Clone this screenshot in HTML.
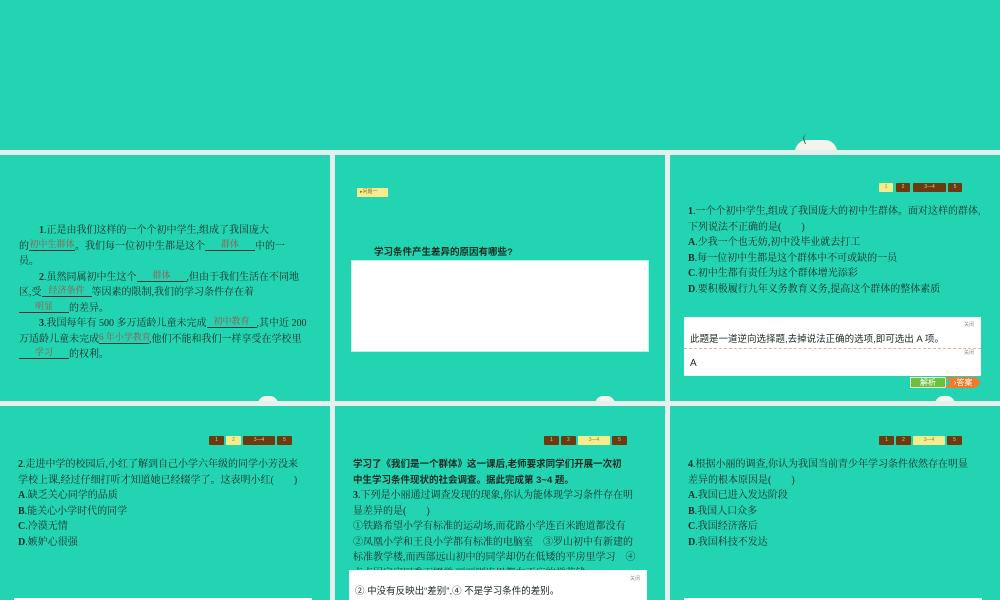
<!DOCTYPE html>
<html><head><meta charset="utf-8"><style>
*{margin:0;padding:0;box-sizing:border-box}
body{width:1000px;height:600px;overflow:hidden;background:#e3f0ec;position:relative;font-family:"Liberation Serif","Noto Serif CJK SC",serif;color:#1a2a20}
.p{position:absolute;background:#22d4b2;overflow:hidden}
.t{position:absolute;font-size:10px;line-height:15.5px;white-space:nowrap}
.b{font-weight:bold}
.s{font-family:"Liberation Sans","Noto Sans CJK SC",sans-serif}
.u{display:inline-block;border-bottom:1px solid #333;text-align:center;color:#a0524a;font-size:9px;line-height:11px;height:12px;vertical-align:2px}
.nav{position:absolute;height:9px}
.nav span{position:absolute;top:0;height:9px;background:#6b3a0e;color:#e8c890;font-size:5px;line-height:9px;text-align:center;border-radius:1px;font-family:"Liberation Sans",sans-serif}
.nav span.y{background:#f6ec8c;color:#9a8040}
.wb{position:absolute;background:#fff}
.dome{position:absolute;width:34px;height:14px;border-radius:17px 17px 0 0;background:#f4f4ec}
</style></head><body>
<div class="p" style="left:0;top:0;width:1000px;height:150px">
<div class="dome" style="left:795px;top:140px;width:42px;height:12px"></div>
<div style="position:absolute;left:803px;top:133px;width:10px;height:10px;border-left:1.5px solid #2a4a3a;border-radius:6px 0 0 0;transform:rotate(-20deg)"></div>
</div>

<!-- row1 panel1 -->
<div class="p" style="left:0;top:155px;width:330px;height:246px">
<div class="t" style="left:19px;top:68px">　　<b>1</b>.正是由我们这样的一个个初中学生,组成了我国庞大<br>的<span class="u" style="width:46px">初中生群体</span>。我们每一位初中生都是这个<span class="u" style="width:50px">群体</span>中的一<br>员。<br>　　<b>2</b>.虽然同属初中生这个<span class="u" style="width:50px">群体</span>,但由于我们生活在不同地<br>区,受<span class="u" style="width:50px">经济条件</span>等因素的限制,我们的学习条件存在着<br><span class="u" style="width:50px">明显</span>的差异。<br>　　<b>3</b>.我国每年有 500 多万适龄儿童未完成<span class="u" style="width:50px">初中教育</span>,其中近 200<br>万适龄儿童未完成<span class="u" style="width:50px">6 年小学教育</span>,他们不能和我们一样享受在学校里<br><span class="u" style="width:50px">学习</span>的权利。</div>
<div class="dome" style="left:258px;top:241px;width:20px;height:8px"></div>
</div>

<!-- row1 panel2 -->
<div class="p" style="left:335px;top:155px;width:330px;height:246px">
<div style="position:absolute;left:22px;top:33px;width:31px;height:9px;background:#f6ec8c;font-size:5px;line-height:9px;color:#8a6a30;padding-left:3px;font-family:'Liberation Sans','Noto Sans CJK SC',sans-serif">▸问题一</div>
<div class="t s b" style="left:39px;top:90px;font-size:9.5px">学习条件产生差异的原因有哪些?</div>
<div class="wb" style="left:16px;top:105px;width:298px;height:92px;border:1px solid #bdf0e0"></div>
<div class="dome" style="left:260px;top:241px;width:20px;height:8px"></div>
</div>

<!-- row1 panel3 -->
<div class="p" style="left:670px;top:155px;width:330px;height:246px">
<div class="nav" style="left:209px;top:28px"><span class="y" style="left:0;width:14px">1</span><span style="left:17px;width:14px">2</span><span style="left:34px;width:33px">3—4</span><span style="left:69px;width:14px">5</span></div>
<div class="t" style="left:18px;top:49px"><b>1</b>.一个个初中学生,组成了我国庞大的初中生群体。面对这样的群体,<br>下列说法不正确的是(　　)<br><b>A</b>.少我一个也无妨,初中没毕业就去打工<br><b>B</b>.每一位初中生都是这个群体中不可或缺的一员<br><b>C</b>.初中生都有责任为这个群体增光添彩<br><b>D</b>.要积极履行九年义务教育义务,提高这个群体的整体素质</div>
<div class="wb" style="left:14px;top:162px;width:297px;height:59px"></div>
<div class="t s" style="left:294px;top:163px;font-size:5px;color:#888">关闭</div>
<div class="t s" style="left:20px;top:177px;font-size:9.5px">此题是一道逆向选择题,去掉说法正确的选项,即可选出 A 项。</div>
<div style="position:absolute;left:14px;top:193px;width:297px;border-top:1px dashed #e8b0a0"></div>
<div class="t s" style="left:294px;top:191px;font-size:5px;color:#888">关闭</div>
<div class="t s" style="left:20px;top:201px;font-size:10px">A</div>
<div style="position:absolute;left:240px;top:222px;width:36px;height:11px;background:#6cc040;border:1px solid #f0f0c0;color:#fff;font-size:8px;line-height:9px;text-align:center;font-family:'Liberation Sans','Noto Sans CJK SC',sans-serif">解析</div>
<div style="position:absolute;left:275px;top:222px;width:36px;height:11px;background:#f07a30;color:#fff;font-size:8px;line-height:11px;text-align:center;clip-path:polygon(0 0,85% 0,100% 50%,85% 100%,0 100%,15% 50%);font-family:'Liberation Sans','Noto Sans CJK SC',sans-serif">›答案</div>
<div class="dome" style="left:265px;top:241px;width:20px;height:8px"></div>
</div>

<!-- row2 panel1 -->
<div class="p" style="left:0;top:406px;width:330px;height:194px">
<div class="nav" style="left:209px;top:30px"><span style="left:0;width:15px">1</span><span class="y" style="left:17px;width:15px">2</span><span style="left:34px;width:32px">3—4</span><span style="left:68px;width:15px">5</span></div>
<div class="t" style="left:18px;top:51px"><b>2</b>.走进中学的校园后,小红了解到自己小学六年级的同学小芳没来<br>学校上课,经过仔细打听才知道她已经辍学了。这表明小红(　　)<br><b>A</b>.缺乏关心同学的品质<br><b>B</b>.能关心小学时代的同学<br><b>C</b>.冷漠无情<br><b>D</b>.嫉妒心很强</div>
<div class="wb" style="left:14px;top:192px;width:298px;height:10px"></div>
</div>

<!-- row2 panel2 -->
<div class="p" style="left:335px;top:406px;width:330px;height:194px">
<div class="nav" style="left:209px;top:30px"><span style="left:0;width:15px">1</span><span style="left:17px;width:15px">2</span><span class="y" style="left:34px;width:32px">3—4</span><span style="left:68px;width:15px">5</span></div>
<div class="t" style="left:18px;top:51px"><span class="s b" style="font-size:9.5px">学习了《我们是一个群体》这一课后,老师要求同学们开展一次初<br>中生学习条件现状的社会调查。据此完成第 3~4 题。</span><br><b>3</b>.下列是小丽通过调查发现的现象,你认为能体现学习条件存在明<br>显差异的是(　　)<br>①铁路希望小学有标准的运动场,而花路小学连百米跑道都没有<br>②凤凰小学和王良小学都有标准的电脑室　③罗山初中有新建的<br>标准教学楼,而西部远山初中的同学却仍在低矮的平房里学习　④<br>点点因家庭困难而辍学,丽丽则连里都在不应的学花钱</div>
<div class="wb" style="left:14px;top:164px;width:298px;height:40px"></div>
<div class="t s" style="left:295px;top:166px;font-size:5px;color:#888">关闭</div>
<div class="t s" style="left:20px;top:178px;font-size:9.5px">② 中没有反映出“差别”,④ 不是学习条件的差别。</div>
</div>

<!-- row2 panel3 -->
<div class="p" style="left:670px;top:406px;width:330px;height:194px">
<div class="nav" style="left:209px;top:30px"><span style="left:0;width:15px">1</span><span style="left:17px;width:15px">2</span><span class="y" style="left:34px;width:32px">3—4</span><span style="left:68px;width:15px">5</span></div>
<div class="t" style="left:18px;top:51px"><b>4</b>.根据小丽的调查,你认为我国当前青少年学习条件依然存在明显<br>差异的根本原因是(　　)<br><b>A</b>.我国已进入发达阶段<br><b>B</b>.我国人口众多<br><b>C</b>.我国经济落后<br><b>D</b>.我国科技不发达</div>
<div class="wb" style="left:14px;top:192px;width:298px;height:10px"></div>
</div>
</body></html>
